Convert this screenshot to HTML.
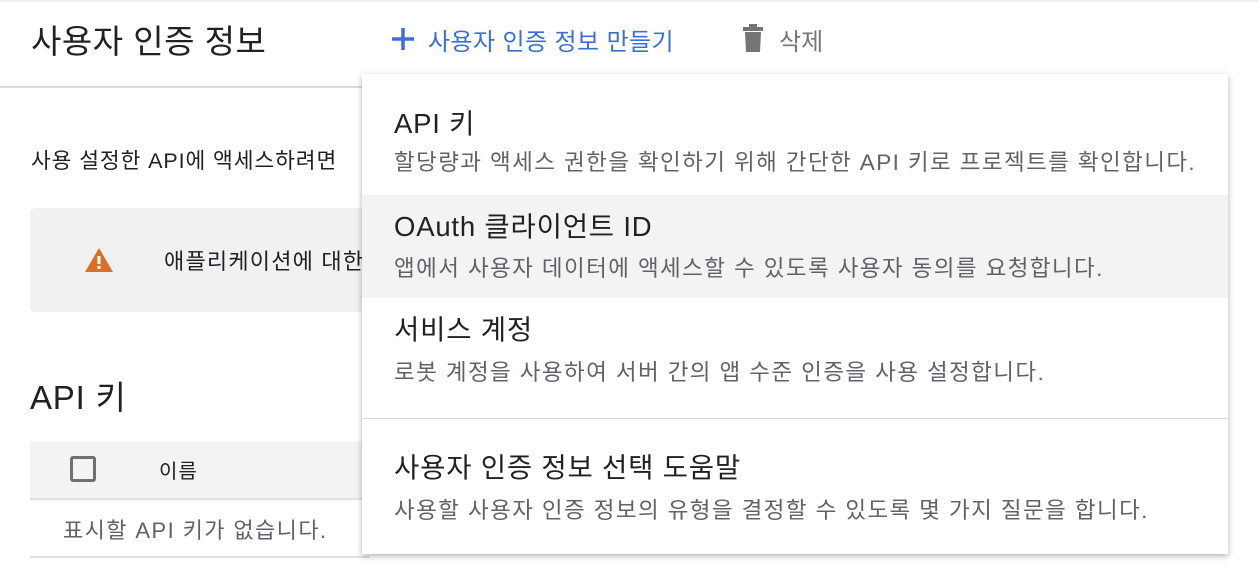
<!DOCTYPE html>
<html><head><meta charset="utf-8"><style>
body{margin:0;width:1258px;height:574px;overflow:hidden;background:#fff;font-family:"Liberation Sans","Noto Sans CJK KR",sans-serif;position:relative;color:#202124}
.a{position:absolute;white-space:nowrap}
.t{font-size:27.5px;letter-spacing:0.8px}
.d{font-size:22.5px;letter-spacing:1.4px;color:#5f6368}
</style></head><body>
<div class="a" style="left:0;top:0;width:1258px;height:3px;background:linear-gradient(#e8e8e8,#fff)"></div>
<div class="a" style="left:31px;top:15px;font-size:33px;letter-spacing:0.5px;color:#202124">사용자 인증 정보</div>
<svg class="a" style="left:390px;top:26px" width="26" height="26" viewBox="0 0 26 26"><path d="M13 2v22M2 13h22" stroke="#3b6fd6" stroke-width="3.5"/></svg>
<div class="a" style="left:428px;top:22px;font-size:24px;letter-spacing:0.4px;color:#3b6fd6">사용자 인증 정보 만들기</div>
<svg class="a" style="left:742px;top:23px" width="22" height="30" viewBox="0 0 22 30"><rect x="1" y="4" width="20" height="4" fill="#757575"/><rect x="7" y="1" width="8" height="4" fill="#757575"/><path d="M3 9h16l-1 20H4z" fill="#757575"/></svg>
<div class="a" style="left:779px;top:22px;font-size:24px;color:#757575">삭제</div>
<div class="a" style="left:0;top:86px;width:362px;height:2px;background:#dcdcdc"></div>
<div class="a" style="left:31px;top:144px;font-size:21.5px;letter-spacing:0.9px">사용 설정한 API에 액세스하려면</div>
<div class="a" style="left:30px;top:208px;width:340px;height:104px;background:#f1f1f1;border-radius:6px"></div>
<svg class="a" style="left:84px;top:247px" width="30" height="26" viewBox="0 0 30 26"><path d="M15 1L29 25H1z" fill="#d5712a"/><rect x="13.5" y="9" width="3" height="8" fill="#fff"/><rect x="13.5" y="19" width="3" height="3" fill="#fff"/></svg>
<div class="a" style="left:164px;top:244px;font-size:22px;letter-spacing:1.2px">애플리케이션에 대한</div>
<div class="a" style="left:30px;top:371px;font-size:33px;letter-spacing:0.8px">API 키</div>
<div class="a" style="left:30px;top:442px;width:340px;height:56px;background:#f3f3f3;border-bottom:2px solid #e0e0e0"></div>
<div class="a" style="left:70px;top:456px;width:26px;height:26px;border:3px solid #707070;border-radius:3px;box-sizing:border-box"></div>
<div class="a" style="left:159px;top:455px;font-size:20px;letter-spacing:1px">이름</div>
<div class="a" style="left:63px;top:513px;font-size:22px;letter-spacing:1.4px;color:#5f6368">표시할 API 키가 없습니다.</div>
<div class="a" style="left:30px;top:556px;width:340px;height:2px;background:#e0e0e0"></div>
<div class="a" style="left:362px;top:74px;width:866px;height:480px;background:#fff;box-shadow:0 2px 6px rgba(0,0,0,.3)">
<div class="a" style="left:0;top:121px;width:866px;height:103px;background:#f3f3f3"></div>
<div class="a t" style="left:32px;top:27px">API 키</div>
<div class="a d" style="left:32px;top:71px">할당량과 액세스 권한을 확인하기 위해 간단한 API 키로 프로젝트를 확인합니다.</div>
<div class="a t" style="left:32px;top:130px">OAuth 클라이언트 ID</div>
<div class="a d" style="left:32px;top:177px">앱에서 사용자 데이터에 액세스할 수 있도록 사용자 동의를 요청합니다.</div>
<div class="a t" style="left:32px;top:233px">서비스 계정</div>
<div class="a d" style="left:32px;top:281px">로봇 계정을 사용하여 서버 간의 앱 수준 인증을 사용 설정합니다.</div>
<div class="a" style="left:0;top:344px;width:866px;height:1px;background:#dcdcdc"></div>
<div class="a t" style="left:32px;top:371px">사용자 인증 정보 선택 도움말</div>
<div class="a d" style="left:32px;top:419px">사용할 사용자 인증 정보의 유형을 결정할 수 있도록 몇 가지 질문을 합니다.</div>
</div>
</body></html>
